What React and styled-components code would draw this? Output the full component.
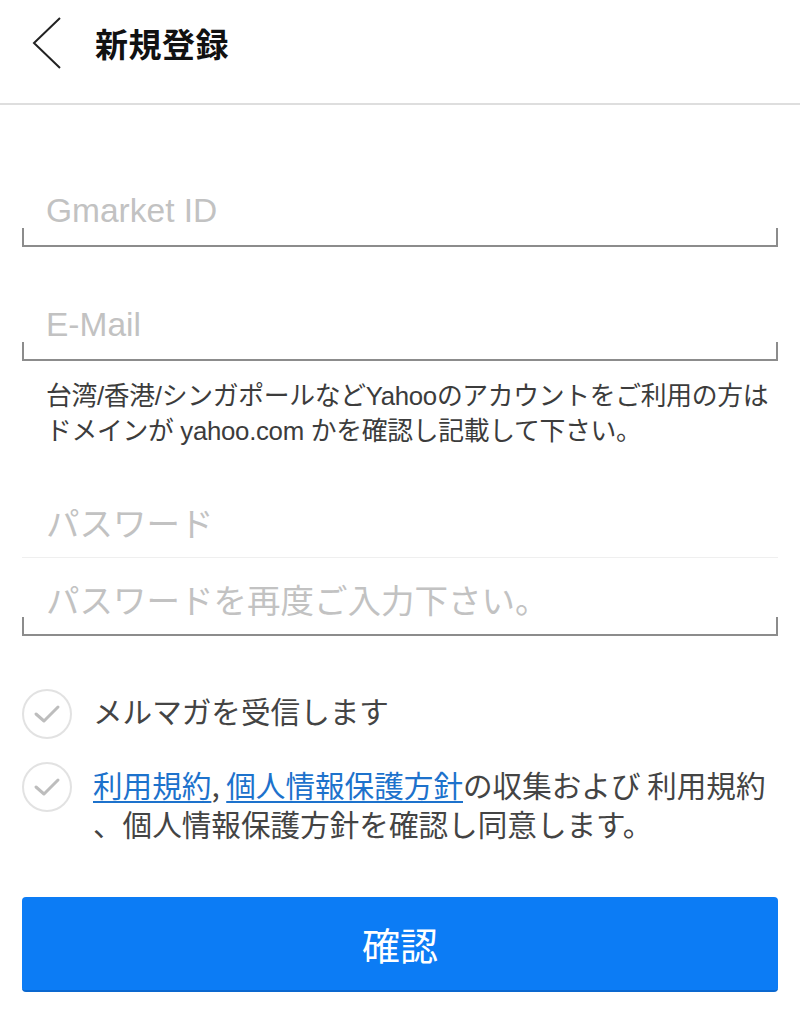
import styled, { createGlobalStyle } from "styled-components";

const GlobalStyle = createGlobalStyle`
  html, body {
    margin: 0;
    padding: 0;
    background: #fff;
  }
  body {
    font-family: "Liberation Sans", "Noto Sans CJK JP", sans-serif;
    color: #444;
  }
  * { box-sizing: border-box; }
`;

const Page = styled.div`
  width: 800px;
  min-height: 1024px;
  background: #fff;
`;

const Header = styled.header`
  height: 105px;
  display: flex;
  align-items: center;
  padding: 0 0 18px 32px;
  gap: 33px;
  border-bottom: 2px solid #dedede;
`;

const BackButton = styled.button`
  border: none;
  background: none;
  padding: 0;
  display: flex;
  cursor: pointer;
`;

const Title = styled.h1`
  margin: 0;
  font-family: "Noto Sans CJK JP", sans-serif;
  font-size: 33px;
  font-weight: 700;
  color: #111;
  letter-spacing: 0.5px;
`;

const Form = styled.form`
  padding: 0 22px;
  display: flex;
  flex-direction: column;
`;

const Field = styled.div`
  position: relative;
  margin-top: ${({ $top }) => $top}px;
  padding-bottom: ${({ $bracket }) => ($bracket ? 4 : 2)}px;
  border-bottom: ${({ $bracket }) => ($bracket ? "2px solid #8c8c8c" : "1px solid #efefef")};

  &::after {
    content: "";
    display: ${({ $bracket }) => ($bracket ? "block" : "none")};
    position: absolute;
    left: 0;
    right: 0;
    bottom: -2px;
    height: 19px;
    border-left: 2px solid #8c8c8c;
    border-right: 2px solid #8c8c8c;
    pointer-events: none;
  }
`;

const Input = styled.input`
  width: 100%;
  height: ${({ $h }) => $h || 60}px;
  border: none;
  outline: none;
  background: transparent;
  padding: 0 0 0 24px;
  font-family: "Liberation Sans", "Noto Sans CJK JP", sans-serif;
  font-size: 33.5px;
  color: #333;

  &::placeholder {
    color: #c2c2c2;
  }
`;

const Helper = styled.p`
  margin: 18px 0 0;
  padding-left: 24px;
  font-family: "Liberation Sans", "Noto Sans CJK JP", sans-serif;
  font-size: 25.8px;
  line-height: 35px;
  color: #3c3c3c;
  letter-spacing: -0.3px;
`;

const CheckRow = styled.label`
  display: flex;
  align-items: flex-start;
  gap: 21px;
  margin-top: ${({ $top }) => $top}px;
`;

const Circle = styled.span`
  flex: none;
  width: 50px;
  height: 50px;
  border-radius: 50%;
  border: 2px solid #e2e2e2;
  display: flex;
  align-items: center;
  justify-content: center;
`;

const CheckText = styled.span`
  font-family: "Noto Sans CJK JP", sans-serif;
  font-size: 29.6px;
  line-height: 39px;
  color: #444;
  margin-top: ${({ $top }) => $top}px;
`;

const Link = styled.a`
  color: #1d72cc;
  text-decoration: underline;
  text-underline-offset: 4px;
  text-decoration-thickness: 2px;
`;

const Submit = styled.button`
  margin-top: 54px;
  height: 95px;
  width: 100%;
  border: none;
  border-bottom: 2px solid #0a68d0;
  border-radius: 4px;
  background: #0c7cf5;
  color: #fff;
  font-family: "Noto Sans CJK JP", sans-serif;
  font-size: 38px;
  cursor: pointer;
`;

const Check = () => (
  <svg width="30" height="24" viewBox="0 0 30 24" fill="none">
    <path d="M4 12 L12 19 L26 5" stroke="#bdbdbd" strokeWidth="3" strokeLinecap="round" strokeLinejoin="round" />
  </svg>
);

const Chevron = () => (
  <svg width="30" height="52" viewBox="0 0 30 52" fill="none">
    <path d="M28 1 L2 26 L28 51" stroke="#222" strokeWidth="2" />
  </svg>
);

const App = () => {
  return (
    <Page>
      <GlobalStyle />
      <Header>
        <BackButton aria-label="戻る">
          <Chevron />
        </BackButton>
        <Title>新規登録</Title>
      </Header>
      <Form onSubmit={(e) => e.preventDefault()}>
        <Field $top={76} $bracket>
          <Input placeholder="Gmarket ID" />
        </Field>
        <Field $top={48} $bracket>
          <Input placeholder="E-Mail" />
        </Field>
        <Helper>
          台湾/香港/シンガポールなどYahooのアカウントをご利用の方は
          <br />
          ドメインが yahoo.com かを確認し記載して下さい。
        </Helper>
        <Field $top={46}>
          <Input type="password" placeholder="パスワード" />
        </Field>
        <Field $top={16} $bracket>
          <Input type="password" placeholder="パスワードを再度ご入力下さい。" $h={56} />
        </Field>
        <CheckRow $top={53}>
          <Circle>
            <Check />
          </Circle>
          <CheckText $top={2}>メルマガを受信します</CheckText>
        </CheckRow>
        <CheckRow $top={23}>
          <Circle>
            <Check />
          </Circle>
          <CheckText $top={3}>
            <Link href="#">利用規約</Link>, <Link href="#">個人情報保護方針</Link>の収集および 利用規約
            <br />
            、個人情報保護方針を確認し同意します。
          </CheckText>
        </CheckRow>
        <Submit type="submit">確認</Submit>
      </Form>
    </Page>
  );
};

export default App;
